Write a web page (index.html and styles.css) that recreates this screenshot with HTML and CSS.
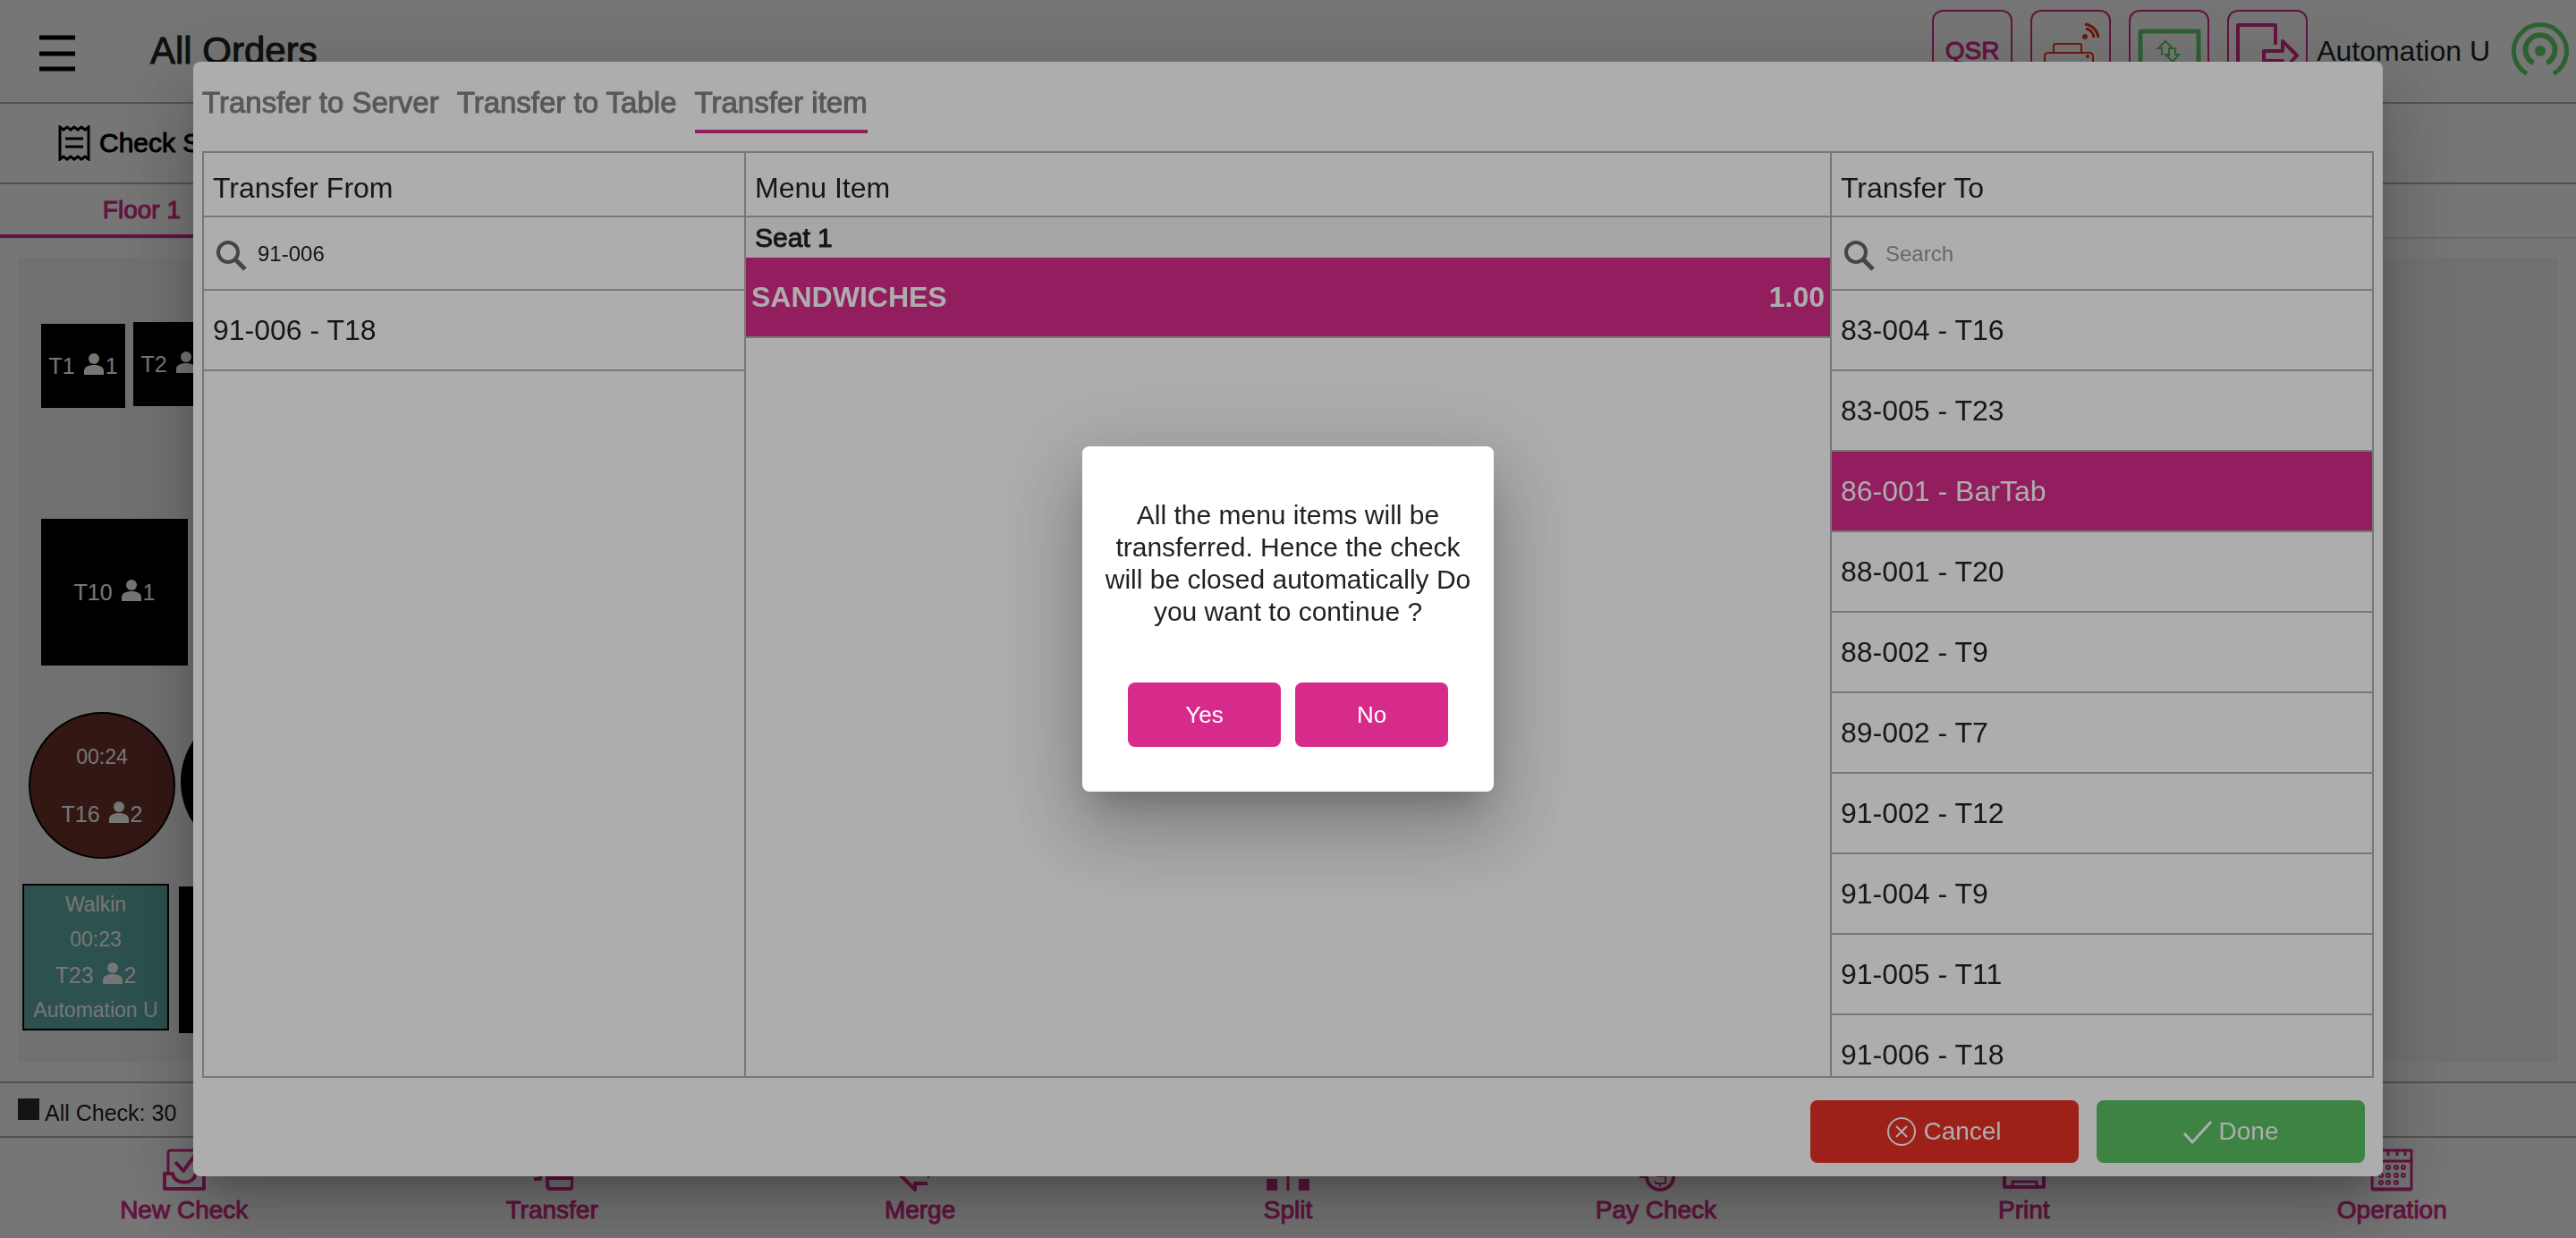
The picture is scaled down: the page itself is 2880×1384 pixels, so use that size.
FILE: index.html
```html
<!DOCTYPE html>
<html lang="en">
<head>
<meta charset="utf-8">
<title>All Orders</title>
<link rel="stylesheet" href="styles.css">
</head>
<body>
<svg width="0" height="0" class="sprite" aria-hidden="true">
  <symbol id="person" viewBox="0 0 22 24"><circle cx="11" cy="6" r="6"/><path d="M0 24v-4c0-5 5-7 11-7s11 2 11 7v4z"/></symbol>
  <symbol id="magnifier" viewBox="0 0 34 34"><circle cx="13" cy="13" r="11" fill="none" stroke="currentColor" stroke-width="4"/><path d="M21 21l11 11" stroke="currentColor" stroke-width="5"/></symbol>
</svg>

<div class="app">
  <header class="topbar">
    <button class="menu" aria-label="Menu"><svg viewBox="0 0 40 42" width="40" height="42"><path d="M0 3h40M0 21h40M0 38h40" stroke="#000" stroke-width="5"/></svg></button>
    <h1 class="title">All Orders</h1>
    <button class="tool">QSR</button>
    <button class="tool" aria-label="Printer"><svg class="red" viewBox="2 2 86 86" fill="none" stroke="currentColor" stroke-width="2"><path d="M26 47V39q0-2 2-2h27q2 0 2 2v8M16 70V51q0-4 4-4h46q4 0 4 4v19z"/><path d="M62 20a11 11 0 0 1 9 10M61 15a17 17 0 0 1 15 15" stroke-width="3"/><circle cx="61" cy="29" r="2" fill="currentColor"/><circle cx="64" cy="51" r="1"/></svg></button>
    <button class="tool" aria-label="Sync"><svg class="green" viewBox="2 2 86 86" fill="none" stroke="currentColor" stroke-width="5"><rect x="13" y="23" width="65" height="44" rx="1"/><path d="M37 50v-8h-4l8-8 8 8h-4v8l-4 0M52 41v8h4l-7 8-8-8h4v-6" stroke-width="2"/></svg></button>
    <button class="tool" aria-label="Log out"><svg viewBox="2 2 86 86" fill="none" stroke="currentColor" stroke-width="4" stroke-linejoin="round"><path d="M54 38V16H12v58h42V62"/><path d="M41 45h21V34l16 16-16 17V56H41z"/></svg></button>
    <span class="user">Automation U</span>
    <svg class="antenna" viewBox="0 0 64 64" fill="none" stroke="currentColor"><circle cx="32" cy="32" r="6" fill="currentColor" stroke="none"/><path d="M24.500 45.500a16.500 16.500 0 1 1 15 0" stroke-width="6"/><path d="M17 57.500a29.500 29.500 0 1 1 30 0" stroke-width="5"/></svg>
  </header>

  <div class="toolbar">
    <button class="summary"><svg viewBox="0 0 36 40" width="36" height="40" fill="none" stroke="currentColor" stroke-width="4"><path d="M2 2l4 3 4-3 4 3 4-3 4 3 4-3 4 3 4-3v36l-4-3-4 3-4-3-4 3-4-3-4 3-4-3-4 3z" stroke-width="3"/><path d="M8 15h20M8 24h20" stroke-width="3"/></svg>Check Summary</button>
  </div>

  <nav class="floors"><button class="floor">Floor 1</button></nav>

  <main class="plan">
    <div class="table small t1"><span class="seats">T1 <svg><use href="#person"/></svg>1</span></div>
    <div class="table small t2"><span class="seats">T2 <svg><use href="#person"/></svg>1</span></div>
    <div class="table t10"><span class="seats">T10 <svg><use href="#person"/></svg>1</span></div>
    <div class="table round brown t16"><span>00:24</span><span class="seats">T16 <svg><use href="#person"/></svg>2</span></div>
    <div class="table round t17"></div>
    <div class="table teal t23"><span>Walkin</span><span>00:23</span><span class="seats">T23 <svg><use href="#person"/></svg>2</span><span>Automation U</span></div>
    <div class="table t24"></div>
  </main>

  <div class="status"><i class="swatch"></i><span>All Check: 30</span></div>

  <footer class="actions">
    <button><svg viewBox="0 0 48 48"><path d="M6 27V5q0-3 3-3h30q3 0 3 3v22" stroke-width="3"/><path d="M14 15l9 10L37 6"/><path d="M2 28h9c2 13 24 13 26 0h9v17H2z"/></svg>New Check</button>
    <button><svg viewBox="0 0 48 48"><path d="M19 33V10q0-4 4-4h20q4 0 4 4v31q0 4-4 4H23q-4 0-4-4V33h28"/><path d="M11 28v6H4"/></svg>Transfer</button>
    <button><svg viewBox="0 0 48 48"><path d="M32 31h2M32 39H18v7L2 30l16-16v7h14"/></svg>Merge</button>
    <button><svg viewBox="0 0 48 48"><path d="M24 2v45" stroke-width="3"/><path d="M0 34h12v13H0zM36 34h12v13H36zM0 8h12v13H0zM36 8h12v13H36z" fill="currentColor" stroke="none"/></svg>Split</button>
    <button><svg viewBox="0 0 48 48"><circle cx="29" cy="31" r="15"/><path d="M33 25h-7v6h9v8H24l-1-3M29 39v4" stroke-width="2"/><path d="M6 31h8"/></svg>Pay Check</button>
    <button><svg viewBox="0 0 48 48"><path d="M2 20h44v23H2z"/><path d="M11 43v-6h27v6" stroke-width="3"/></svg>Print</button>
    <button><svg viewBox="0 0 48 48"><path d="M2 2h44v43H2zM2 14h44" stroke-width="3"/><path d="M10 2v6M20 2v6M30 2v6M39 2v6M2 46h44" stroke-width="3"/><g stroke-width="2"><circle cx="20" cy="21" r="2"/><circle cx="29" cy="21" r="2"/><circle cx="37" cy="21" r="2"/><circle cx="12" cy="30" r="2"/><circle cx="20" cy="30" r="2"/><circle cx="29" cy="30" r="2"/><circle cx="37" cy="30" r="2"/><circle cx="12" cy="38" r="2"/><circle cx="20" cy="38" r="2"/><circle cx="29" cy="38" r="2"/></g></svg>Operation</button>
  </footer>
</div>

<div class="backdrop">
  <section class="modal transfer" role="dialog" aria-label="Transfer item">
    <div class="tabs">
      <button class="tab">Transfer to Server</button>
      <button class="tab">Transfer to Table</button>
      <button class="tab active">Transfer item</button>
    </div>
    <div class="columns">
      <div class="column from">
        <h2>Transfer From</h2>
        <label class="search"><svg><use href="#magnifier"/></svg><input type="text" value="91-006" aria-label="Search check to transfer from"></label>
        <button class="row">91-006 - T18</button>
      </div>
      <div class="column">
        <h2>Menu Item</h2>
        <h3>Seat 1</h3>
        <button class="row item selected"><span>SANDWICHES</span><span>1.00</span></button>
      </div>
      <div class="column to">
        <h2>Transfer To</h2>
        <label class="search"><svg><use href="#magnifier"/></svg><input type="text" placeholder="Search" aria-label="Search check to transfer to"></label>
        <button class="row">83-004 - T16</button>
        <button class="row">83-005 - T23</button>
        <button class="row selected">86-001 - BarTab</button>
        <button class="row">88-001 - T20</button>
        <button class="row">88-002 - T9</button>
        <button class="row">89-002 - T7</button>
        <button class="row">91-002 - T12</button>
        <button class="row">91-004 - T9</button>
        <button class="row">91-005 - T11</button>
        <button class="row">91-006 - T18</button>
      </div>
    </div>
    <div class="buttons">
      <button class="wide cancel"><svg viewBox="0 0 32 32" width="32" height="32"><circle cx="16" cy="16" r="15"/><path d="M10 10l12 12M22 10L10 22"/></svg>Cancel</button>
      <button class="wide done"><svg viewBox="0 0 32 32" width="32" height="32"><path d="M1 18l9 10L31 5" stroke-width="3"/></svg>Done</button>
    </div>
  </section>
</div>

<div class="backdrop">
  <section class="modal confirm" role="alertdialog" aria-labelledby="message">
    <p id="message">All the menu items will be transferred. Hence the check will be closed automatically Do you want to continue ?</p>
    <div class="choices"><button>Yes</button><button>No</button></div>
  </section>
</div>
</body>
</html>
```
FILE: styles.css
```css
:root {
  --brand: #d72b8c;
  --line: #b0b0b0;
}

* { box-sizing: border-box; }

body {
  margin: 0;
  font-family: "Liberation Sans", Arial, sans-serif;
  font-size: 32px;
  line-height: 36px;
  color: #222;
  background: #fff;
  overflow: hidden;
}

button {
  padding: 0;
  border: 0;
  background: none;
  color: inherit;
  font: inherit;
}

h1, h2, h3, p { margin: 0; font-weight: 400; }

.sprite { position: absolute; }

/* Page */
.app {
  display: flex;
  flex-direction: column;
  height: 100vh;
}

.topbar {
  display: flex;
  align-items: center;
  height: 116px;
  padding: 0 8px 0 44px;
  border-bottom: 2px solid var(--line);
}

.menu { display: flex; padding-top: 6px; }

.title {
  flex: 1;
  margin-left: 84px;
  font-size: 42px;
  -webkit-text-stroke: 1px;
}

.tool {
  width: 90px;
  height: 92px;
  margin-right: 20px;
  border: 2px solid var(--brand);
  border-radius: 12px;
  color: var(--brand);
  font-size: 28px;
  -webkit-text-stroke: 1px;
}

.tool svg { display: block; width: 86px; height: 86px; }
.tool .red { color: #f0301f; }
.tool .green { color: #5fd16c; }

.user { margin-left: -10px; }

.antenna {
  width: 64px;
  height: 64px;
  margin-left: 24px;
  color: #5fd16c;
}

.toolbar {
  display: flex;
  align-items: center;
  height: 90px;
  padding-left: 65px;
  border-bottom: 2px solid var(--line);
}

.summary {
  display: flex;
  align-items: center;
  gap: 10px;
  color: #000;
  font-size: 30px;
  -webkit-text-stroke: 1px;
}

.floors {
  height: 61px;
  box-shadow: inset 0 -2px #e0e0e0;
}

.floor {
  width: 11%;
  height: 60px;
  padding-top: 2px;
  border-bottom: 4px solid var(--brand);
  color: var(--brand);
  font-size: 28px;
  -webkit-text-stroke: 1px;
}

.plan {
  position: relative;
  flex: 1;
  margin: 21px 20px;
  background: #f5f5f5;
}

.table {
  position: absolute;
  display: flex;
  flex-direction: column;
  align-items: center;
  justify-content: space-evenly;
  width: 164px;
  height: 164px;
  border: 2px solid #000;
  background: #000;
  color: #fff;
  font-size: 23px;
}

.small { width: 94px; height: 94px; }
.round { border-radius: 50%; justify-content: center; gap: 28px; }
.brown { background: #6e322b; }
.teal { background: #5fafa8; }

.seats {
  display: flex;
  align-items: center;
  font-size: 25px;
}

.seats svg {
  width: 22px;
  height: 24px;
  margin: 0 2px 4px 10px;
  fill: #fff;
}

.t1 { left: 26px; top: 74px; }
.t2 { left: 129px; top: 72px; }
.t10 { left: 26px; top: 292px; }
.t16 { left: 12px; top: 508px; }
.t17 { left: 182px; top: 504px; }
.t23 { left: 5px; top: 700px; }
.t24 { left: 180px; top: 703px; }

.status {
  display: flex;
  gap: 6px;
  height: 63px;
  padding: 17px 20px 0;
  border: solid var(--line);
  border-width: 2px 0;
  font-size: 25px;
  line-height: 32px;
}

.swatch { width: 24px; height: 24px; background: #2d2d2d; }

.actions {
  display: grid;
  grid-template-columns: repeat(7, 1fr);
  height: 112px;
}

.actions button {
  display: flex;
  flex-direction: column;
  align-items: center;
  gap: 3px;
  padding-top: 12px;
  color: var(--brand);
  font-size: 28px;
  -webkit-text-stroke: 1px;
}

.actions svg {
  width: 48px;
  height: 48px;
  fill: none;
  stroke: currentColor;
  stroke-width: 4px;
  stroke-linejoin: round;
}

/* Dialogs */
.backdrop {
  position: fixed;
  inset: 0;
  display: flex;
  align-items: center;
  justify-content: center;
  background: rgba(0, 0, 0, .32);
}

.modal {
  border-radius: 8px;
  background: #fff;
  box-shadow: 0 22px 30px -14px rgba(0, 0, 0, .2),
    0 48px 76px 6px rgba(0, 0, 0, .14),
    0 18px 92px 16px rgba(0, 0, 0, .12);
}

.transfer {
  display: flex;
  flex-direction: column;
  width: 85vw;
  height: 90vh;
  padding: 28px 10px 15px;
}

.tabs { display: flex; gap: 20px; margin-bottom: 20px; }

.tab {
  padding-bottom: 12px;
  border-bottom: 4px solid transparent;
  color: #828282;
  font-size: 33px;
  -webkit-text-stroke: 1px;
}

.tab.active { border-color: var(--brand); }

.columns {
  display: grid;
  grid-template-columns: 1fr 2fr 1fr;
  flex: 1;
  min-height: 0;
  border: 2px solid var(--line);
}

.column {
  display: flex;
  flex-direction: column;
  overflow: hidden;
}

.from { border-right: 2px solid var(--line); }
.to { border-left: 2px solid var(--line); }

h2 {
  padding: 21px 10px 13px;
  border-bottom: 2px solid var(--line);
  font-size: 32px;
}

h3 {
  height: 45px;
  padding: 5px 10px;
  background: #f5f5f5;
  font-size: 30px;
  -webkit-text-stroke: 1px;
}

.search {
  display: flex;
  flex: none;
  align-items: center;
  gap: 12px;
  height: 82px;
  padding-left: 14px;
  border-bottom: 2px solid var(--line);
}

.search svg { width: 34px; height: 34px; margin-top: 6px; color: #666; }

.search input {
  flex: 1;
  min-width: 0;
  padding: 2px 0 0;
  border: 0;
  background: none;
  color: inherit;
  font: inherit;
  font-size: 24px;
}

.search input::placeholder { color: #999; }

.row {
  flex: none;
  height: 90px;
  padding: 0 10px;
  border-bottom: 2px solid var(--line);
  text-align: left;
}

.row.selected { background: var(--brand); color: #fff; }

.item {
  display: flex;
  align-items: center;
  justify-content: space-between;
  padding: 0 6px;
  font-weight: 700;
}

.buttons {
  display: flex;
  justify-content: flex-end;
  gap: 20px;
  padding: 25px 10px 0;
}

.wide {
  display: flex;
  align-items: center;
  justify-content: center;
  gap: 8px;
  width: 300px;
  height: 70px;
  border-radius: 8px;
  color: #fff;
  font-size: 28px;
}

.wide svg { fill: none; stroke: currentColor; stroke-width: 2px; }
.cancel { background: #e83226; }
.done { background: #5ac265; }

.confirm {
  width: 460px;
  padding: 59px 20px 50px;
  text-align: center;
  font-size: 30px;
}

.choices {
  display: flex;
  justify-content: center;
  gap: 16px;
  margin-top: 61px;
}

.choices button {
  width: 171px;
  height: 72px;
  border-radius: 8px;
  background: var(--brand);
  color: #fff;
  font-size: 26px;
}
```
